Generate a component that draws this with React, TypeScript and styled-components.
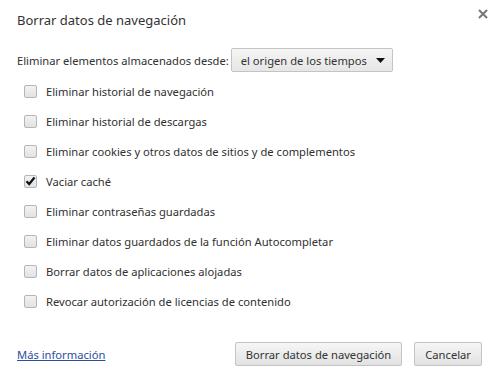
import React from "react";
import styled, { createGlobalStyle } from "styled-components";

const GlobalStyle = createGlobalStyle`
  html, body {
    margin: 0;
    padding: 0;
    background: #ffffff;
  }
  body {
    font-family: "Noto Sans", "Open Sans", Arial, sans-serif;
    font-size: 11.2px;
    color: #303030;
  }
`;

const options = [
  { label: "Eliminar historial de navegación", checked: false },
  { label: "Eliminar historial de descargas", checked: false },
  { label: "Eliminar cookies y otros datos de sitios y de complementos", checked: false },
  { label: "Vaciar caché", checked: true },
  { label: "Eliminar contraseñas guardadas", checked: false },
  { label: "Eliminar datos guardados de la función Autocompletar", checked: false },
  { label: "Borrar datos de aplicaciones alojadas", checked: false },
  { label: "Revocar autorización de licencias de contenido", checked: false },
];

function App() {
  return (
    <>
      <GlobalStyle />
      <Dialog>
        <Header>
          <Title>Borrar datos de navegación</Title>
          <CloseButton aria-label="Cerrar">
            <svg width="10" height="10" viewBox="0 0 10 10">
              <path d="M1 1 L9 9 M9 1 L1 9" stroke="#777" strokeWidth="2" />
            </svg>
          </CloseButton>
        </Header>

        <SinceRow>
          <span>Eliminar elementos almacenados desde:</span>
          <Select>
            <span>el origen de los tiempos</span>
            <svg width="9" height="5" viewBox="0 0 9 5">
              <path d="M0 0 H9 L4.5 5 Z" fill="#111" />
            </svg>
          </Select>
        </SinceRow>

        <OptionList>
          {options.map((opt) => (
            <OptionRow key={opt.label}>
              <CheckBox>
                {opt.checked && (
                  <svg width="11" height="10" viewBox="0 0 11 10">
                    <path
                      d="M1.5 5.2 L4.2 8 L9.5 1.5"
                      stroke="#111"
                      strokeWidth="2.2"
                      fill="none"
                    />
                  </svg>
                )}
              </CheckBox>
              <span>{opt.label}</span>
            </OptionRow>
          ))}
        </OptionList>

        <Footer>
          <MoreLink href="#">Más información</MoreLink>
          <ButtonGroup>
            <Button>Borrar datos de navegación</Button>
            <Button>Cancelar</Button>
          </ButtonGroup>
        </Footer>
      </Dialog>
    </>
  );
}

const Dialog = styled.div`
  width: 499px;
  height: 379px;
  box-sizing: border-box;
  padding: 0 17px;
  display: flex;
  flex-direction: column;
`;

const Header = styled.div`
  display: flex;
  justify-content: space-between;
  align-items: flex-start;
  padding-top: 10px;
  height: 30px;
  box-sizing: border-box;
`;

const Title = styled.div`
  font-size: 13px;
  line-height: 20px;
  color: #333333;
`;

const CloseButton = styled.button`
  border: none;
  background: none;
  padding: 0;
  margin: -1px -8px 0 0;
  width: 14px;
  height: 10px;
  display: flex;
  align-items: center;
  justify-content: center;
`;

const SinceRow = styled.div`
  display: flex;
  align-items: center;
  gap: 2px;
  margin-top: 18px;
  height: 24px;
`;

const Select = styled.div`
  width: 162px;
  height: 24px;
  box-sizing: border-box;
  display: flex;
  align-items: center;
  justify-content: space-between;
  padding: 0 7px 0 9px;
  border: 1px solid #c4c4c4;
  border-radius: 2px;
  background: linear-gradient(#f5f5f5, #e6e6e6);
  color: #333333;
  white-space: nowrap;
`;

const OptionList = styled.div`
  margin-top: 4px;
  padding-left: 7px;
  display: flex;
  flex-direction: column;
`;

const OptionRow = styled.label`
  display: flex;
  align-items: center;
  gap: 9px;
  height: 30px;
`;

const CheckBox = styled.span`
  width: 13px;
  height: 13px;
  box-sizing: border-box;
  border: 1px solid #b5b5b5;
  border-radius: 2px;
  background: linear-gradient(#f2f2f2, #e2e2e2);
  display: flex;
  align-items: center;
  justify-content: center;
  flex-shrink: 0;
`;

const Footer = styled.div`
  margin-top: 26px;
  display: flex;
  align-items: center;
  justify-content: space-between;
  height: 24px;
`;

const MoreLink = styled.a`
  color: #2a4f9b;
  text-decoration: underline;
`;

const ButtonGroup = styled.div`
  display: flex;
  gap: 12px;
`;

const Button = styled.button`
  height: 24px;
  box-sizing: border-box;
  padding: 0 10px;
  font-family: inherit;
  font-size: 11.2px;
  color: #333333;
  border: 1px solid #c4c4c4;
  border-radius: 2px;
  background: linear-gradient(#f6f6f6, #e2e2e2);
`;

export default App;
